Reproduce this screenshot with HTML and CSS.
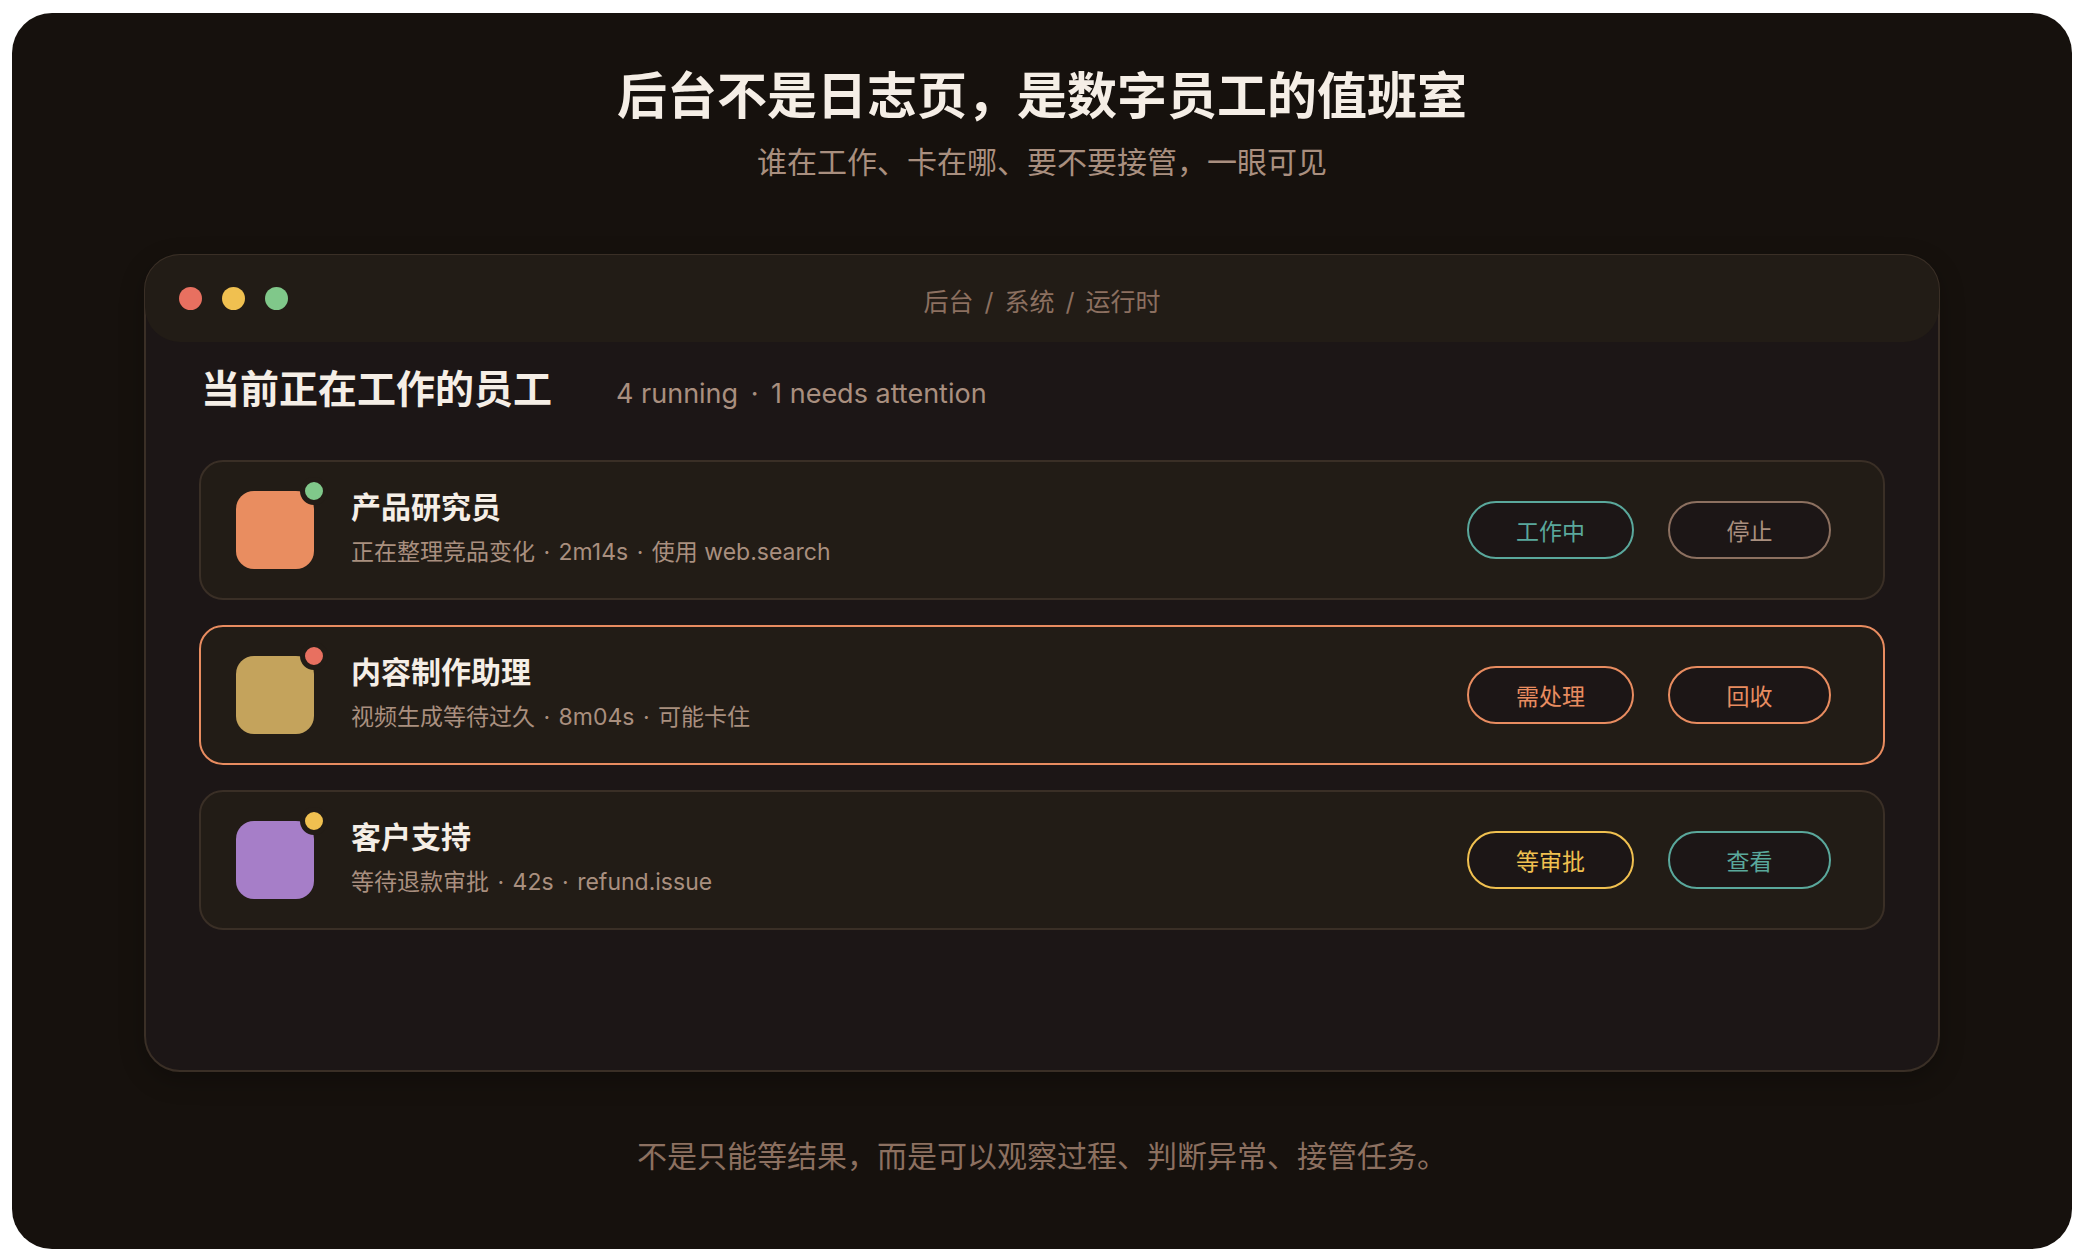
FILE: index.html
```html
<!DOCTYPE html>
<html lang="zh-CN">
<head>
    <meta charset="UTF-8">
    <meta name="viewport" content="width=device-width, initial-scale=1.0">
    <title>后台不是日志页，是数字员工的值班室</title>
    <link rel="stylesheet" href="styles.css">
</head>
<body>
    <main class="stage">
        <header class="intro">
            <h1 class="title">后台不是日志页，是数字员工的值班室</h1>
            <p class="subtitle">谁在工作、卡在哪、要不要接管，一眼可见</p>
        </header>

        <section class="window">
            <div class="titlebar">
                <div class="lights">
                    <span class="light red"></span>
                    <span class="light yellow"></span>
                    <span class="light green"></span>
                </div>
                <div class="breadcrumb">后台 <span class="sep">/</span> 系统 <span class="sep">/</span> 运行时</div>
            </div>

            <div class="content">
                <div class="section-head">
                    <h2>当前正在工作的员工</h2>
                    <span class="summary">4 running <span class="sep">·</span> 1 needs attention</span>
                </div>

                <ul class="workers">
                    <li class="worker">
                        <div class="avatar orange"><span class="dot green"></span></div>
                        <div class="info">
                            <h3>产品研究员</h3>
                            <p>正在整理竞品变化 <span class="sep">·</span> 2m14s <span class="sep">·</span> 使用 web.search</p>
                        </div>
                        <span class="pill status teal">工作中</span>
                        <button type="button" class="pill action muted">停止</button>
                    </li>
                    <li class="worker alert">
                        <div class="avatar gold"><span class="dot red"></span></div>
                        <div class="info">
                            <h3>内容制作助理</h3>
                            <p>视频生成等待过久 <span class="sep">·</span> 8m04s <span class="sep">·</span> 可能卡住</p>
                        </div>
                        <span class="pill status coral">需处理</span>
                        <button type="button" class="pill action coral">回收</button>
                    </li>
                    <li class="worker">
                        <div class="avatar purple"><span class="dot yellow"></span></div>
                        <div class="info">
                            <h3>客户支持</h3>
                            <p>等待退款审批 <span class="sep">·</span> 42s <span class="sep">·</span> refund.issue</p>
                        </div>
                        <span class="pill status amber">等审批</span>
                        <button type="button" class="pill action teal">查看</button>
                    </li>
                </ul>
            </div>
        </section>

        <footer class="caption">不是只能等结果，而是可以观察过程、判断异常、接管任务。</footer>
    </main>
</body>
</html>
```
FILE: styles.css
```css
:root {
    --bg: #16110d;
    --panel: #1c1616;
    --surface: #221c16;
    --line: #3a2f26;
    --text: #f5eee6;
    --text-soft: #a98f7f;
    --text-dim: #8c7060;
    --red: #e87060;
    --yellow: #f0c050;
    --green: #80c88a;
    --coral: #e88c60;
    --teal: #5aa89c;
}

* {
    box-sizing: border-box;
}

body {
    margin: 0;
    min-height: 100vh;
    padding: 13px 24px 11px 12px;
    display: flex;
    background: #fff;
    color: var(--text);
    font-family: Inter, "Noto Sans CJK SC", sans-serif;
}

h1, h2, h3, p, ul {
    margin: 0;
    padding: 0;
}

.stage {
    flex: 1;
    padding: 53px 132px 68px;
    border-radius: 40px;
    background: var(--bg);
}

.intro {
    text-align: center;
    margin-bottom: 69px;
}

.title {
    font-size: 50px;
    line-height: 60px;
    font-weight: 700;
}

.subtitle {
    margin-top: 13px;
    font-size: 30px;
    line-height: 46px;
    color: var(--text-soft);
}

/* 窗口 */
.window {
    padding-bottom: 140px;
    border: 2px solid var(--line);
    border-radius: 36px;
    background: var(--panel);
    box-shadow: 0 8px 24px rgba(0, 0, 0, 0.25);
}

/* 标题栏压住一半边框 */
.titlebar {
    display: grid;
    grid-template-columns: 1fr auto 1fr;
    align-items: center;
    height: 87px;
    margin: -1px -1px 0;
    padding: 0 34px;
    border-radius: 35px;
    background: var(--surface);
}

.lights {
    display: flex;
    gap: 20px;
}

.light {
    width: 23px;
    height: 23px;
    border-radius: 50%;
}

.red { background: var(--red); }
.yellow { background: var(--yellow); }
.green { background: var(--green); }

.breadcrumb {
    padding-top: 6px;
    font-size: 25px;
    line-height: 36px;
    color: var(--text-dim);
}

.breadcrumb .sep {
    margin: 0 4px;
}

.content {
    padding: 17px 53px 0;
}

.section-head {
    display: flex;
    align-items: baseline;
    gap: 64px;
    margin-bottom: 41px;
    padding-left: 2px;
}

.section-head h2 {
    font-size: 39px;
    line-height: 60px;
    font-weight: 700;
}

.summary {
    font-size: 27px;
    color: var(--text-soft);
}

.summary .sep {
    margin: 0 5px;
}

/* 员工列表 */
.workers {
    display: flex;
    flex-direction: column;
    gap: 25px;
    list-style: none;
}

.worker {
    display: flex;
    align-items: center;
    height: 140px;
    padding: 0 52px 0 35px;
    border: 2px solid var(--line);
    border-radius: 24px;
    background: var(--surface);
}

.worker.alert {
    border-color: var(--coral);
}

.avatar {
    position: relative;
    width: 78px;
    height: 78px;
    border-radius: 18px;
}

.avatar.orange { background: #e98d60; }
.avatar.gold { background: #c4a35c; }
.avatar.purple { background: #a67ec8; }

.dot {
    position: absolute;
    top: -14px;
    right: -14px;
    width: 28px;
    height: 28px;
    border: 5px solid var(--surface);
    border-radius: 50%;
}

.info {
    flex: 1;
    margin-left: 37px;
    padding-bottom: 3px;
}

.info h3 {
    font-size: 30px;
    line-height: 46px;
    font-weight: 700;
}

.info p {
    font-size: 23px;
    line-height: 44px;
    color: var(--text-soft);
}

.info .sep {
    margin: 0 2px;
}

.pill {
    display: flex;
    align-items: center;
    justify-content: center;
    height: 58px;
    padding: 0;
    border: 2px solid currentColor;
    border-radius: 29px;
    background: var(--panel);
    font: inherit;
    font-size: 23px;
}

.status {
    width: 167px;
}

.action {
    width: 163px;
    margin-left: 34px;
    cursor: pointer;
}

.teal { color: var(--teal); }
.coral { color: var(--coral); }
.amber { color: var(--yellow); }

.muted {
    color: var(--text-soft);
    border-color: var(--text-dim);
}

.caption {
    margin-top: 61px;
    font-size: 30px;
    line-height: 46px;
    text-align: center;
    color: var(--text-dim);
}
```
